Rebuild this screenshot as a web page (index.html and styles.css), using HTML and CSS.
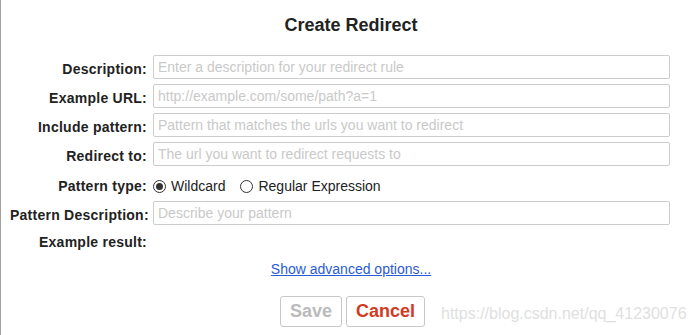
FILE: index.html
```html
<!DOCTYPE html>
<html>
<head>
<meta charset="utf-8">
<link rel="stylesheet" href="styles.css">
</head>
<body>
<div class="page">
  <h1 class="title">Create Redirect</h1>
  <div class="form">
    <label class="lbl">Description:</label>
    <input class="inp" type="text" placeholder="Enter a description for your redirect rule">
    <label class="lbl">Example URL:</label>
    <input class="inp" type="text" placeholder="http://example.com/some/path?a=1">
    <label class="lbl">Include pattern:</label>
    <input class="inp" type="text" placeholder="Pattern that matches the urls you want to redirect">
    <label class="lbl">Redirect to:</label>
    <input class="inp" type="text" placeholder="The url you want to redirect requests to">
    <label class="lbl lbl-radio">Pattern type:</label>
    <div class="radios">
      <label class="radio"><span class="dot on"></span>Wildcard</label>
      <label class="radio"><span class="dot"></span>Regular Expression</label>
    </div>
    <label class="lbl">Pattern Description:</label>
    <input class="inp" type="text" placeholder="Describe your pattern">
    <label class="lbl lbl-result">Example result:</label>
    <div></div>
  </div>
  <div class="advanced"><a href="#" class="link">Show advanced options...</a></div>
  <div class="actions">
    <button class="btn save">Save</button>
    <button class="btn cancel">Cancel</button>
    <span class="watermark">https://blog.csdn.net/qq_41230076</span>
  </div>
</div>
</body>
</html>
```
FILE: styles.css
```css
html, body {
  margin: 0;
  padding: 0;
  background: #fff;
}
.page {
  box-sizing: border-box;
  height: 335px;
  border-left: 1px solid #a0a0a0;
  padding-left: 9px;
  font-family: "Liberation Sans", Arial, sans-serif;
  color: #222;
  position: relative;
}
.title {
  margin: 0;
  padding-top: 15px;
  height: 55px;
  box-sizing: border-box;
  text-align: center;
  font-size: 18px;
  font-weight: bold;
  line-height: 20px;
  color: #222;
}
.form {
  display: grid;
  grid-template-columns: 137px 517px;
  column-gap: 6px;
  row-gap: 5px;
  align-items: center;
}
.lbl {
  text-align: right;
  font-weight: bold;
  font-size: 14px;
  letter-spacing: 0.25px;
  white-space: nowrap;
  color: #222;
  padding-top: 3px;
}
.inp {
  box-sizing: border-box;
  height: 24px;
  width: 517px;
  margin: 0;
  border: 1px solid #cccccc;
  border-radius: 2px;
  padding: 0 4px;
  font-family: "Liberation Sans", Arial, sans-serif;
  font-size: 14px;
  outline: none;
}
.inp::placeholder {
  color: #c9c9c9;
}
.lbl-radio, .radios {
  margin-top: 7px;
  margin-bottom: 2px;
}
.lbl-radio, .lbl-result {
  padding-top: 0;
}
.radios {
  display: flex;
  gap: 15px;
  font-size: 14px;
  color: #222;
}
.radio {
  display: flex;
  align-items: center;
  gap: 5px;
}
.dot {
  box-sizing: border-box;
  width: 13px;
  height: 13px;
  border: 1px solid #333;
  border-radius: 50%;
  display: inline-block;
  position: relative;
}
.dot.on::after {
  content: "";
  position: absolute;
  left: 2px;
  top: 2px;
  width: 7px;
  height: 7px;
  border-radius: 50%;
  background: #333;
}
.lbl-result {
  margin-top: 4px;
}
.advanced {
  text-align: center;
  margin-top: 11px;
  font-size: 14px;
}
.link {
  color: #2a5bd7;
  text-decoration: underline;
}
.actions {
  display: flex;
  justify-content: center;
  gap: 4px;
  margin-top: 19px;
  padding-left: 3px;
  position: relative;
}
.btn {
  box-sizing: border-box;
  height: 31px;
  padding: 0 9px;
  background: #fff;
  border: 1px solid #c8c8c8;
  border-radius: 3px;
  font-family: "Liberation Sans", Arial, sans-serif;
  font-weight: bold;
  font-size: 18px;
}
.save {
  color: #bbbbbb;
}
.cancel {
  color: #d23a22;
}
.watermark {
  position: absolute;
  left: 431px;
  top: 9px;
  font-size: 16px;
  color: #e0e0e0;
  white-space: nowrap;
}
```
